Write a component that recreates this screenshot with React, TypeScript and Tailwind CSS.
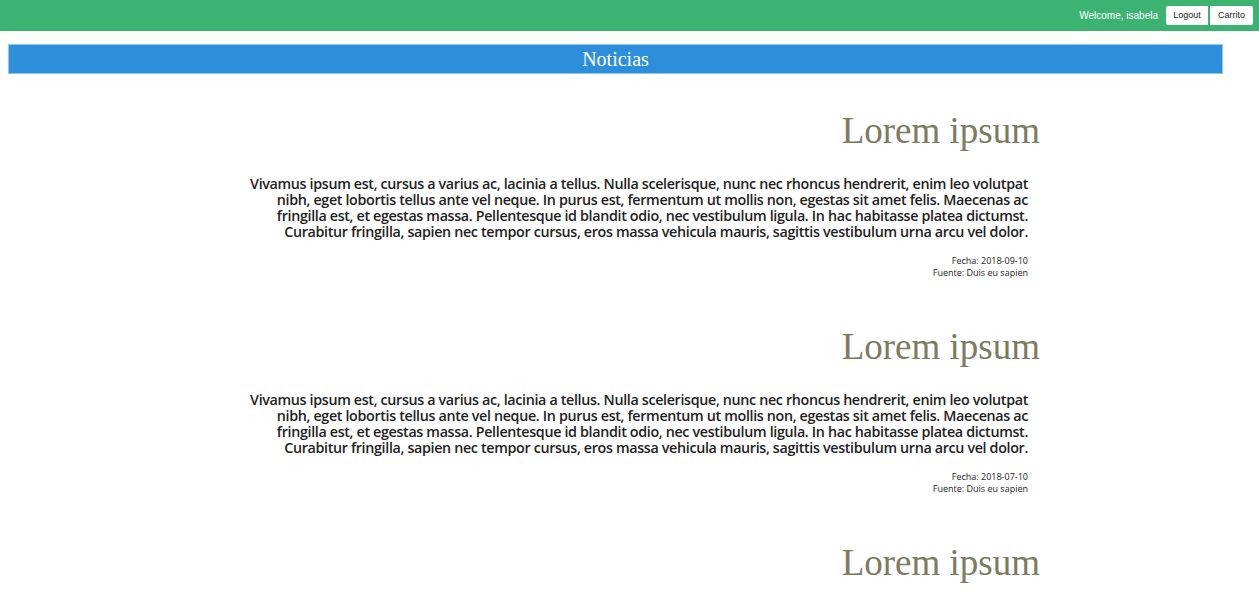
import React from "react";

const body = [
  "Vivamus ipsum est, cursus a varius ac, lacinia a tellus. Nulla scelerisque, nunc nec rhoncus hendrerit, enim leo volutpat",
  "nibh, eget lobortis tellus ante vel neque. In purus est, fermentum ut mollis non, egestas sit amet felis. Maecenas ac",
  "fringilla est, et egestas massa. Pellentesque id blandit odio, nec vestibulum ligula. In hac habitasse platea dictumst.",
  "Curabitur fringilla, sapien nec tempor cursus, eros massa vehicula mauris, sagittis vestibulum urna arcu vel dolor.",
];

const news = [
  { fecha: "2018-09-10", fuente: "Duis eu sapien" },
  { fecha: "2018-07-10", fuente: "Duis eu sapien" },
  { fecha: "2018-05-10", fuente: "Duis eu sapien" },
];

function Article({ fecha, fuente }: { fecha: string; fuente: string }) {
  return (
    <article className="w-[1040px]">
      <h2 className="text-right text-[37px] leading-[44px] text-[#7b7b60] [font-family:'Liberation_Serif',serif]">
        Lorem ipsum
      </h2>
      <p className="mt-[23px] mr-[12px] text-right text-[14.3px] leading-[16px] font-semibold text-[#222] [font-family:'Open_Sans',sans-serif] tracking-[-0.34px]">
        {body.map((l, i) => (
          <span key={i}>
            {l}
            {i < body.length - 1 && <br />}
          </span>
        ))}
      </p>
      <div className="mt-[15px] mr-[12px] text-right text-[9px] leading-[12px] text-[#222] [font-family:'Open_Sans',sans-serif]">
        <div>Fecha: {fecha}</div>
        <div>Fuente: {fuente}</div>
      </div>
    </article>
  );
}

export default function App() {
  return (
    <div className="min-h-screen bg-white">
      <header className="flex h-[31px] items-center justify-end bg-[#3cb371] pr-[6px] [font-family:'Liberation_Sans',Arial,sans-serif]">
        <span className="mr-[8px] text-[10px] text-white">Welcome, isabela</span>
        <button className="h-[19px] w-[42px] rounded-l-[2px] bg-white text-[9px] text-[#222]">Logout</button>
        <button className="ml-[2px] h-[19px] w-[43px] rounded-r-[2px] bg-white text-[9px] text-[#222]">Carrito</button>
      </header>
      <div className="ml-[8px] mt-[13px] flex h-[30px] w-[1215px] items-center justify-center border border-[#8cc8f0] bg-[#2d8fdb]">
        <span className="text-[20px] text-white [font-family:'Liberation_Serif',serif]">Noticias</span>
      </div>
      <main className="mt-[35px] flex flex-col gap-[46px]">
        {news.map((n, i) => (
          <Article key={i} {...n} />
        ))}
      </main>
    </div>
  );
}
